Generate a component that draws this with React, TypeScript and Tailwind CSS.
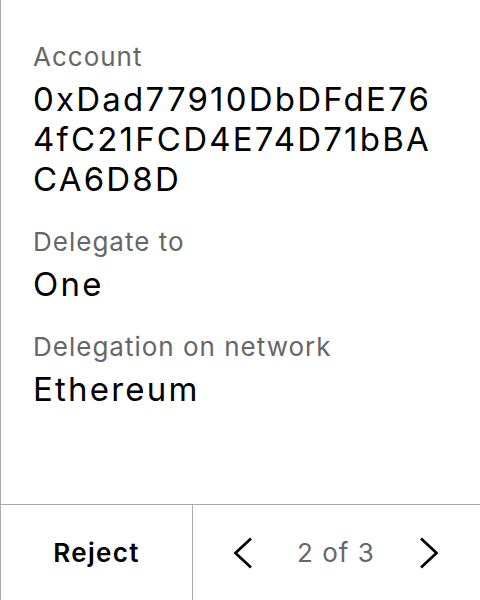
import React from "react";

export default function App() {
  return (
    <div
      className="w-[480px] h-[600px] bg-white border-l border-[#aaaaaa] flex flex-col text-black"
      style={{ fontFamily: "Inter, 'Noto Sans', sans-serif" }}
    >
      <div className="flex-1 pl-[32px] pr-2 pt-[41px] flex flex-col gap-[27px]">
        <div className="flex flex-col">
          <div className="text-[26px] leading-[32px] tracking-[1px] text-[#666666] mb-[6px]">Account</div>
          <div className="text-[33px] leading-[40px] tracking-[2.2px] whitespace-nowrap">
            0xDad77910DbDFdE76
            <br />
            4fC21FCD4E74D71bBA
            <br />
            CA6D8D
          </div>
        </div>
        <div className="flex flex-col">
          <div className="text-[26px] leading-[32px] tracking-[1px] text-[#666666] mb-[6px]">Delegate to</div>
          <div className="text-[33px] leading-[40px] tracking-[2.2px]">One</div>
        </div>
        <div className="flex flex-col">
          <div className="text-[26px] leading-[32px] tracking-[1px] text-[#666666] mb-[6px]">Delegation on network</div>
          <div className="text-[33px] leading-[40px] tracking-[2.2px]">Ethereum</div>
        </div>
      </div>
      <div className="h-[96px] border-t border-[#aaaaaa] flex">
        <div className="w-[192px] border-r border-[#aaaaaa] flex items-center justify-center text-[26px] tracking-[1.3px] font-semibold">
          Reject
        </div>
        <div className="flex-1 flex items-center justify-between pl-[41px] pr-[42px]">
          <svg width="18" height="32" viewBox="0 0 18 32" fill="none">
            <path d="M17 1.5 L1.5 16 L17 30.5" stroke="black" strokeWidth="2.6" />
          </svg>
          <span className="text-[26px] tracking-[1px] text-[#666666]">2 of 3</span>
          <svg width="18" height="32" viewBox="0 0 18 32" fill="none">
            <path d="M1 1.5 L16.5 16 L1 30.5" stroke="black" strokeWidth="2.6" />
          </svg>
        </div>
      </div>
    </div>
  );
}
